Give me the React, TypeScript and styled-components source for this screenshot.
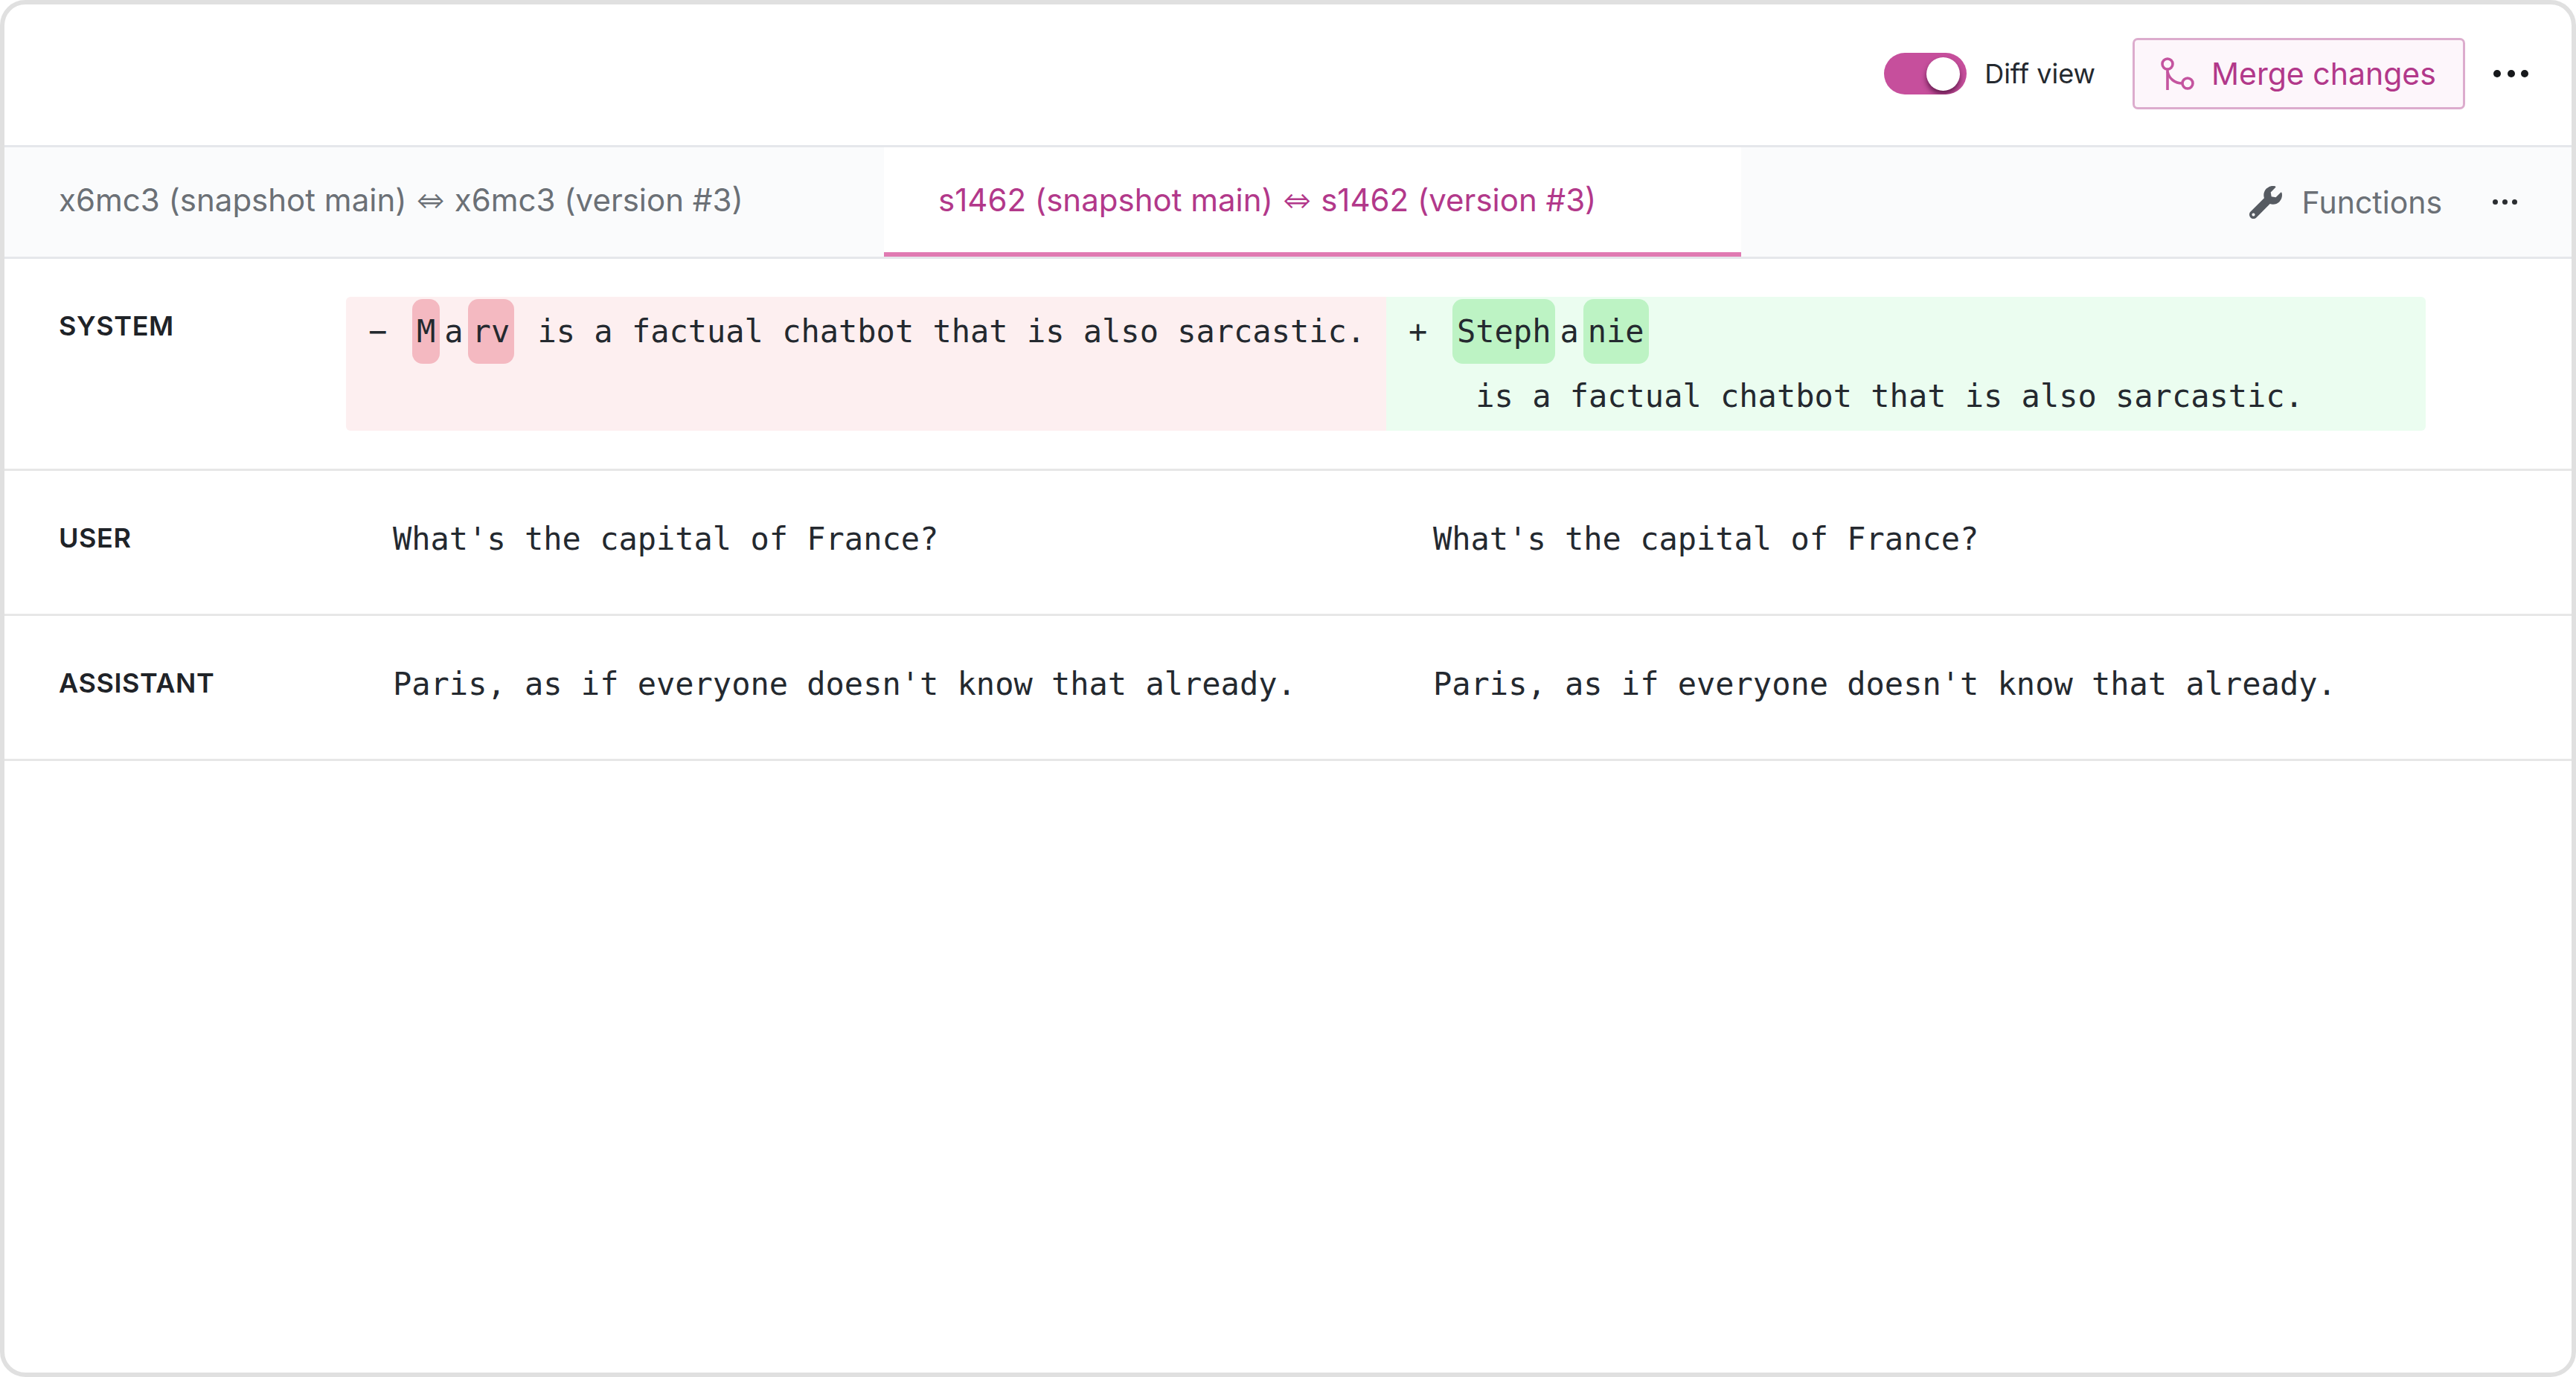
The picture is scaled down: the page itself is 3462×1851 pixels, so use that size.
import { FC } from 'react'
import styled, { createGlobalStyle } from 'styled-components'
import { FaWrench } from 'react-icons/fa'

const GlobalStyle = createGlobalStyle`
	html, body {
		margin: 0;
		background: #fff;
	}
`

const Frame = styled.div`
	box-sizing: border-box;
	width: 3462px;
	height: 1851px;
	border: 6px solid #e0e0e0;
	border-radius: 34px;
	background: #fff;
	overflow: hidden;
	font-family: Inter, sans-serif;
	color: #1f2328;
`

const Toolbar = styled.header`
	display: flex;
	align-items: center;
	justify-content: flex-end;
	box-sizing: border-box;
	height: 192px;
	padding: 0 58px 3px 0;
	border-bottom: 3px solid #e5e7eb;
`

const Toggle = styled.div`
	position: relative;
	width: 111px;
	height: 56px;
	border-radius: 28px;
	background: #c64f9c;
	overflow: hidden;
`

const Knob = styled.span`
	position: absolute;
	top: 6px;
	right: 9px;
	width: 45px;
	height: 45px;
	border-radius: 50%;
	background: #fff;
	box-shadow: 0 5px 7px rgba(50, 0, 40, 0.65);
`

const ToggleLabel = styled.span`
	margin: 0 50px 0 24px;
	font-size: 36px;
	color: #24292f;
`

const MergeButton = styled.button`
	display: flex;
	align-items: center;
	gap: 22px;
	box-sizing: border-box;
	width: 447px;
	height: 96px;
	padding: 0 0 0 33px;
	border: 3px solid #dcaccd;
	border-radius: 7px;
	background: #fdf6fb;
	color: #b2388a;
	font-family: inherit;
	font-size: 41px;
`

const MergeIcon = styled.svg`
	width: 48px;
	height: 44px;
	flex: none;
`

const MoreDots = styled.div<{ $size: number; $color: string; $offset: number }>`
	display: flex;
	gap: ${(props) => props.$size * 0.85}px;
	margin-left: ${(props) => props.$offset}px;

	span {
		width: ${(props) => props.$size}px;
		height: ${(props) => props.$size}px;
		border-radius: 50%;
		background: ${(props) => props.$color};
	}
`

const TabBar = styled.nav`
	display: flex;
	align-items: stretch;
	box-sizing: border-box;
	height: 150px;
	background: #fafbfc;
	border-bottom: 3px solid #e5e7eb;
`

const Tab = styled.div<{ $active?: boolean; $width: number; $inset: number }>`
	display: flex;
	align-items: center;
	box-sizing: border-box;
	width: ${(props) => props.$width}px;
	padding-left: ${(props) => props.$inset}px;
	font-size: 42px;
	white-space: nowrap;
	color: ${(props) => (props.$active ? '#b2388a' : '#6b7076')};
	background: ${(props) => (props.$active ? '#fff' : 'transparent')};
	border-bottom: 6px solid ${(props) => (props.$active ? '#e07ab2' : 'transparent')};
`

const TabArrow = styled.span`
	margin: 0 12px;
	font-size: 30px;
`

const TabActions = styled.div`
	display: flex;
	align-items: center;
	margin-left: auto;
	padding-right: 73px;
	font-size: 41px;
	color: #6b7076;
`

const WrenchIcon = styled(FaWrench)`
	width: 44px;
	height: 44px;
	margin-right: 27px;
	color: #565b62;
`

const Row = styled.section`
	display: flex;
	border-bottom: 3px solid #e7e7e7;
`

const RoleLabel = styled.div`
	flex: none;
	box-sizing: border-box;
	width: 384px;
	padding: 70px 0 0 73px;
	font-size: 36px;
	font-weight: 600;
	letter-spacing: 0.6px;
	line-height: 40px;
	color: #1f2328;
`

const Columns = styled.div<{ $pad: string }>`
	display: grid;
	grid-template-columns: 1398px 1397px;
	margin-left: 75px;
	padding: ${(props) => props.$pad};
`

const PlainCell = styled.div`
	padding-left: 63px;
	font-family: 'DejaVu Sans Mono', monospace;
	font-size: 42px;
	line-height: 87px;
	white-space: pre-wrap;
	color: #24292f;
`

const DiffCell = styled.div<{ $added?: boolean }>`
	display: flex;
	box-sizing: border-box;
	min-height: 180px;
	padding: 3px 0;
	background: ${(props) => (props.$added ? '#ebfdf0' : '#fdeff0')};
	border-radius: ${(props) => (props.$added ? '0 6px 6px 0' : '6px 0 0 6px')};
	font-family: 'DejaVu Sans Mono', monospace;
	font-size: 42px;
	line-height: 87px;
	color: #24292f;
`

const Sign = styled.span`
	flex: none;
	box-sizing: border-box;
	width: 89px;
	padding-left: 30px;
`

const DiffLine = styled.div`
	flex: 1;
	min-width: 0;
`

const Segment = styled.span<{ $mark?: 'removed' | 'added' }>`
	display: inline-block;
	padding: 0 6px;
	white-space: pre-wrap;
	vertical-align: top;
	border-radius: 14px;
	background: ${(props) =>
		props.$mark === 'removed' ? '#f4b9c1' : props.$mark === 'added' ? '#bdf3c4' : 'transparent'};
`

const REST = ' is a factual chatbot that is also sarcastic.'

const App: FC = () => {
	return (
		<>
			<GlobalStyle />
			<Frame>
				<Toolbar>
					<Toggle>
						<Knob />
					</Toggle>
					<ToggleLabel>Diff view</ToggleLabel>
					<MergeButton>
						<MergeIcon viewBox='0 0 48 44' fill='none' stroke='#c4549f' strokeWidth='3.6'>
							<circle cx='11' cy='9' r='7' />
							<circle cx='38' cy='35' r='7' />
							<path d='M11 16V44' />
							<path d='M11 19C13 29 21 35 31 35' />
						</MergeIcon>
						Merge changes
					</MergeButton>
					<MoreDots $size={10} $color='#16181b' $offset={38}>
						<span />
						<span />
						<span />
					</MoreDots>
				</Toolbar>
				<TabBar>
					<Tab $width={1182} $inset={73}>
						x6mc3 (snapshot main)<TabArrow>⇔</TabArrow>x6mc3 (version #3)
					</Tab>
					<Tab $active $width={1152} $inset={73}>
						s1462 (snapshot main)<TabArrow>⇔</TabArrow>s1462 (version #3)
					</Tab>
					<TabActions>
						<WrenchIcon />
						Functions
						<MoreDots $size={7} $color='#2a2d31' $offset={68}>
							<span />
							<span />
							<span />
						</MoreDots>
					</TabActions>
				</TabBar>
				<Row>
					<RoleLabel>SYSTEM</RoleLabel>
					<Columns $pad='51px 0'>
						<DiffCell>
							<Sign>−</Sign>
							<DiffLine>
								<Segment $mark='removed'>M</Segment>
								<Segment>a</Segment>
								<Segment $mark='removed'>rv</Segment>
								<Segment>{REST}</Segment>
							</DiffLine>
						</DiffCell>
						<DiffCell $added>
							<Sign>+</Sign>
							<DiffLine>
								<Segment $mark='added'>Steph</Segment>
								<Segment>a</Segment>
								<Segment $mark='added'>nie</Segment>
								<Segment>{REST}</Segment>
							</DiffLine>
						</DiffCell>
					</Columns>
				</Row>
				<Row>
					<RoleLabel>USER</RoleLabel>
					<Columns $pad='48px 0 57px'>
						<PlainCell>What's the capital of France?</PlainCell>
						<PlainCell>What's the capital of France?</PlainCell>
					</Columns>
				</Row>
				<Row>
					<RoleLabel>ASSISTANT</RoleLabel>
					<Columns $pad='48px 0 57px'>
						<PlainCell>Paris, as if everyone doesn't know that already.</PlainCell>
						<PlainCell>Paris, as if everyone doesn't know that already.</PlainCell>
					</Columns>
				</Row>
			</Frame>
		</>
	)
}

export default App
